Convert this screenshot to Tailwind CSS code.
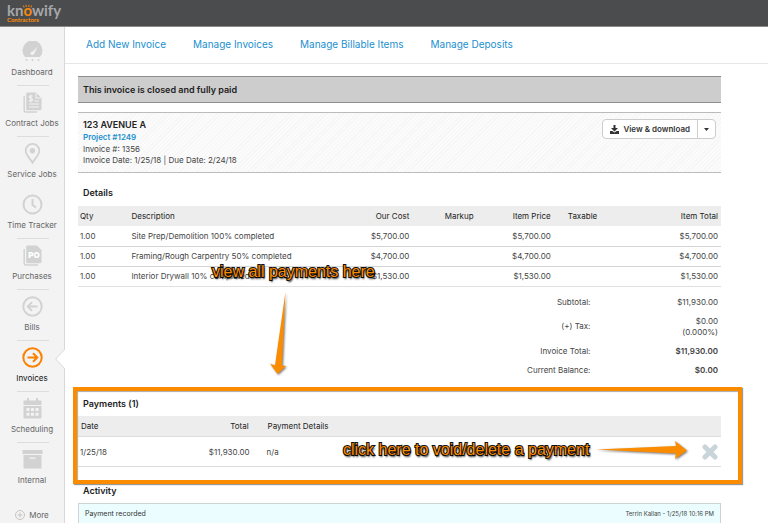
<!DOCTYPE html>
<html lang="en">
<head>
  <meta charset="utf-8">
  <meta name="viewport" content="width=device-width, initial-scale=1">
  <title>Knowify - Invoice</title>
  <script src="https://cdn.jsdelivr.net/npm/@tailwindcss/browser@4"></script>
</head>
<body class="relative flex min-h-screen flex-col bg-white font-['Inter',sans-serif] text-[8px] leading-3 text-[#444]">

  <header class="flex h-[27px] shrink-0 items-start border-b border-[#8a8a8a] bg-[#4b4c4e] px-[7px] pt-1">
    <a href="#" class="relative block font-['Lato',sans-serif]">
      <span class="block text-[15px] leading-[13px] font-bold text-[#a6a7a9]">kn<span class="text-[#f7890b]">o</span>wify</span>
      <span class="block text-[6px] leading-[6px] font-black text-[#f7890b]">Contractors</span>
      <svg class="absolute top-0 left-[16px] h-[4px] w-[9px]" viewBox="0 0 9 4" fill="none" stroke="#f7890b" stroke-width="1"><path d="M1 3.5 0.5 1.5M3.2 3 3 .8M5.8 3 6 .8M8 3.5l.5-2" /></svg>
    </a>
  </header>

  <div class="flex flex-1">
    <!-- sidebar -->
    <nav class="w-[65px] shrink-0 border-r border-[#d8d8d8] bg-[#f3f3f3] pt-2 text-center text-[#666]">
      <ul>
        <li class="relative h-[51px]">
          <a href="#" class="flex flex-col items-center gap-1 pt-[6px]">
            <svg class="h-[21px] w-[21px]" viewBox="0 0 21 21" fill="#d2d2d2"><path d="M3 16A10 10 0 1 1 18 16Z"/><path d="M9 12.5 15.5 5.5 11.8 13.5Z" fill="#f3f3f3"/><circle cx="10.3" cy="12.3" r="1.8" fill="#f3f3f3"/><circle cx="4.5" cy="19" r="1.1"/><circle cx="10.5" cy="19" r="1.1"/><circle cx="16.5" cy="19" r="1.1"/></svg>
            Dashboard
          </a>
          <span class="absolute bottom-0 left-[17px] w-8 border-b border-[#ddd]"></span>
        </li>
        <li class="relative h-[51px]">
          <a href="#" class="flex flex-col items-center gap-1 pt-[6px]">
            <svg class="h-[21px] w-[21px]" viewBox="0 0 21 21"><path d="M2.2 4v14.5a1.5 1.5 0 0 0 1.5 1.5H15" fill="none" stroke="#d2d2d2" stroke-width="1.5"/><path d="M5.5.5H14L19.5 6v11a1.3 1.3 0 0 1-1.3 1.3H5.5A1.3 1.3 0 0 1 4.2 17V1.8A1.3 1.3 0 0 1 5.5.5Z" fill="#d2d2d2"/><path d="M14 1v5h5M12.5 9h4.5M7 12h10M7 15h10M10.5 4.2C9.5 3.4 7.3 3.5 7.3 5s3.2 1 3.2 2.7S8 9.3 7 8.5M8.9 2.7v7.5" fill="none" stroke="#f3f3f3" stroke-width="1.1"/></svg>
            <span class="whitespace-nowrap">Contract Jobs</span>
          </a>
          <span class="absolute bottom-0 left-[17px] w-8 border-b border-[#ddd]"></span>
        </li>
        <li class="relative h-[51px]">
          <a href="#" class="flex flex-col items-center gap-1 pt-[6px]">
            <svg class="h-[21px] w-[21px]" viewBox="0 0 21 21" fill="none" stroke="#d2d2d2" stroke-width="1.8"><path d="M10.5 19.8C9 16.5 3.7 12 3.7 7.7a6.8 6.8 0 0 1 13.6 0c0 4.3-5.3 8.8-6.8 12.1Z"/><circle cx="10.5" cy="7.7" r="2.7" fill="#d2d2d2" stroke="none"/></svg>
            <span class="whitespace-nowrap">Service Jobs</span>
          </a>
        </li>
        <li class="relative h-[51px]">
          <a href="#" class="flex flex-col items-center gap-1 pt-[6px]">
            <svg class="h-[21px] w-[21px]" viewBox="0 0 21 21" fill="none" stroke="#d2d2d2" stroke-width="2"><circle cx="10.5" cy="10.5" r="9"/><path d="M10.5 5v6l3.5 2.5"/></svg>
            <span class="whitespace-nowrap">Time Tracker</span>
          </a>
          <span class="absolute bottom-0 left-[17px] w-8 border-b border-[#ddd]"></span>
        </li>
        <li class="relative h-[51px]">
          <a href="#" class="flex flex-col items-center gap-1 pt-[6px]">
            <svg class="h-[21px] w-[21px]" viewBox="0 0 21 21"><path d="M2.2 4v14.5a1.5 1.5 0 0 0 1.5 1.5H16" fill="none" stroke="#d2d2d2" stroke-width="1.5"/><path d="M5.5.5H15L19.5 5v12a1.3 1.3 0 0 1-1.3 1.3H5.5A1.3 1.3 0 0 1 4.2 17V1.8A1.3 1.3 0 0 1 5.5.5Z" fill="#d2d2d2"/><text x="12" y="12.5" text-anchor="middle" font-size="8" font-weight="900" fill="#fff">PO</text></svg>
            Purchases
          </a>
          <span class="absolute bottom-0 left-[17px] w-8 border-b border-[#ddd]"></span>
        </li>
        <li class="relative h-[51px]">
          <a href="#" class="flex flex-col items-center gap-1 pt-[6px]">
            <svg class="h-[21px] w-[21px]" viewBox="0 0 21 21" fill="none" stroke="#d2d2d2" stroke-width="1.9"><circle cx="10.5" cy="10.5" r="9.2"/><path d="M15.5 10.5H6M10 6.2 5.7 10.5 10 14.8"/></svg>
            Bills
          </a>
          <span class="absolute bottom-0 left-[17px] w-8 border-b border-[#ddd]"></span>
        </li>
        <li class="relative h-[51px]">
          <a href="#" aria-current="page" class="flex flex-col items-center gap-1 pt-[6px] text-[#111]">
            <svg class="h-[21px] w-[21px]" viewBox="0 0 21 21" fill="none" stroke="#fb8200" stroke-width="2"><circle cx="10.5" cy="10.5" r="9.2"/><path d="M5.5 10.5H15M11 6.2 15.3 10.5 11 14.8"/></svg>
            Invoices
          </a>
          <svg class="absolute top-[8px] -right-px h-[20px] w-[10px]" viewBox="0 0 10 20"><path d="M10 0 .7 10 10 20" fill="#fff" stroke="#d8d8d8"/></svg>
          <span class="absolute bottom-0 left-[17px] w-8 border-b border-[#ddd]"></span>
        </li>
        <li class="relative h-[51px]">
          <a href="#" class="flex flex-col items-center gap-1 pt-[6px]">
            <svg class="h-[21px] w-[21px]" viewBox="0 0 21 21" fill="#d2d2d2"><path d="M5 0h2v4H5zM14 0h2v4h-2zM2.5 2.5h16a1 1 0 0 1 1 1V7h-18V3.5a1 1 0 0 1 1-1ZM1.5 8h18v11.5a1 1 0 0 1-1 1h-16a1 1 0 0 1-1-1Z"/><path d="M4.5 10h3v3h-3zM9 10h3v3H9zM13.5 10h3v3h-3zM4.5 14.8h3v3h-3zM9 14.8h3v3H9zM13.5 14.8h3v3h-3z" fill="#f3f3f3"/></svg>
            Scheduling
          </a>
          <span class="absolute bottom-0 left-[17px] w-8 border-b border-[#ddd]"></span>
        </li>
        <li class="relative h-[51px]">
          <a href="#" class="flex flex-col items-center gap-1 pt-[6px]">
            <svg class="h-[21px] w-[21px]" viewBox="0 0 21 21" fill="#d2d2d2"><path d="M.5 1h20v4H.5zM1.5 6h18v13.5h-18z"/><path d="M7.5 8.5h6v1.3h-6z" fill="#f3f3f3"/></svg>
            Internal
          </a>
        </li>
        <li class="pt-[15px]">
          <a href="#" class="flex items-center justify-center gap-1">
            <svg class="h-[10px] w-[10px]" viewBox="0 0 10 10" fill="none" stroke="#c4c4c4"><circle cx="5" cy="5" r="4.5"/><path d="M5 2.5v5M2.5 5h5"/></svg>
            More
          </a>
        </li>
      </ul>
    </nav>

    <main class="flex min-w-0 flex-1 flex-col">
      <nav class="flex h-[37px] shrink-0 items-center gap-[27px] border-b border-[#e6e6e6] px-[21px] pb-[2px] text-[10px] text-[#1b8fd0]">
        <a href="#">Add New Invoice</a>
        <a href="#">Manage Invoices</a>
        <a href="#">Manage Billable Items</a>
        <a href="#">Manage Deposits</a>
      </nav>

      <div class="flex flex-1 flex-col pt-3 pr-[47px] pl-[13px]">
        <p class="flex h-[27px] items-center border-y border-[#8e8e8e] bg-[#cdcdcd] px-[5px] text-[9px] font-semibold text-[#222]">This invoice is closed and fully paid</p>

        <section class="mt-[9px] flex h-[61px] items-start justify-between border-y border-[#bbb] bg-[repeating-linear-gradient(135deg,#fbfbfb_0_2px,#f6f6f6_2px_3px)] px-[5px] pt-[6px]">
          <div>
            <h1 class="text-[9px] font-semibold text-[#222]">123 AVENUE A</h1>
            <a href="#" class="block font-semibold text-[#1b8fd0]">Project #1249</a>
            <p>Invoice #: 1356</p>
            <p class="leading-[11px]">Invoice Date: 1/25/18 | Due Date: 2/24/18</p>
          </div>
          <div class="flex h-5 rounded-sm border border-[#ccc] bg-white text-[#333]">
            <button type="button" class="flex items-center gap-1 px-[7px] font-semibold">
              <svg class="h-[9px] w-[9px]" viewBox="0 0 9 9" fill="#333"><path d="M3.5 0h2v3H8L4.5 6.5 1 3h2.5zM0 6h2.3l2.2 1.5L6.7 6H9v3H0z"/></svg>
              View &amp; download
            </button>
            <button type="button" aria-label="More options" class="flex w-[18px] items-center justify-center border-l border-[#ccc]">
              <svg class="h-[3px] w-[5px]" viewBox="0 0 5 3" fill="#333"><path d="M0 0h5L2.5 3z"/></svg>
            </button>
          </div>
        </section>

        <h2 class="mt-[14px] px-[5px] text-[9px] font-semibold text-[#222]">Details</h2>
        <table class="mt-[7px] w-full table-fixed">
          <thead>
            <tr class="h-5 bg-[#ededed] text-[#222]">
              <th class="w-[8%] px-[2px] text-left font-normal">Qty</th>
              <th class="w-[32%] px-[2px] text-left font-normal">Description</th>
              <th class="w-[12%] px-[3px] text-right font-normal">Our Cost</th>
              <th class="w-[10%] px-[3px] text-right font-normal">Markup</th>
              <th class="w-[12%] px-[3px] text-right font-normal">Item Price</th>
              <th class="w-[12%] pl-[14px] text-left font-normal">Taxable</th>
              <th class="w-[14%] px-[3px] text-right font-normal">Item Total</th>
            </tr>
          </thead>
          <tbody>
            <tr class="h-5 border-b border-[#d4d4d4]">
              <td class="px-[2px]">1.00</td>
              <td class="px-[2px] whitespace-nowrap">Site Prep/Demolition 100% completed</td>
              <td class="px-[3px] text-right">$5,700.00</td>
              <td></td>
              <td class="px-[3px] text-right">$5,700.00</td>
              <td></td>
              <td class="px-[3px] text-right">$5,700.00</td>
            </tr>
            <tr class="h-5 border-b border-[#d4d4d4]">
              <td class="px-[2px]">1.00</td>
              <td class="px-[2px] whitespace-nowrap">Framing/Rough Carpentry 50% completed</td>
              <td class="px-[3px] text-right">$4,700.00</td>
              <td></td>
              <td class="px-[3px] text-right">$4,700.00</td>
              <td></td>
              <td class="px-[3px] text-right">$4,700.00</td>
            </tr>
            <tr class="h-5 border-b border-[#e0e0e0]">
              <td class="px-[2px]">1.00</td>
              <td class="px-[2px] whitespace-nowrap">Interior Drywall 10% completed</td>
              <td class="px-[3px] text-right">$1,530.00</td>
              <td></td>
              <td class="px-[3px] text-right">$1,530.00</td>
              <td></td>
              <td class="px-[3px] text-right">$1,530.00</td>
            </tr>
          </tbody>
        </table>

        <table class="mt-[6px] w-full table-fixed text-right leading-[11px]">
          <tbody>
            <tr class="h-[19px]">
              <th class="w-[80%] px-[2px] font-normal">Subtotal:</th>
              <td class="px-[3px]">$11,930.00</td>
            </tr>
            <tr class="h-[30px]">
              <th class="px-[2px] font-normal">(+) Tax:</th>
              <td class="px-[3px]">$0.00<br>(0.000%)</td>
            </tr>
            <tr class="h-[19px]">
              <th class="px-[2px] font-normal">Invoice Total:</th>
              <td class="px-[3px] font-semibold">$11,930.00</td>
            </tr>
            <tr class="h-[19px]">
              <th class="px-[2px] font-normal">Current Balance:</th>
              <td class="px-[3px] font-semibold">$0.00</td>
            </tr>
          </tbody>
        </table>

        <section class="relative mt-[18px]">
          <h2 class="px-[5px] text-[9px] font-semibold text-[#222]">Payments (1)</h2>
          <table class="mt-[6px] w-full table-fixed">
            <thead>
              <tr class="h-[21px] border-b border-[#ddd] bg-[#ededed] text-[#222]">
                <th class="w-[15%] px-[3px] text-left font-normal">Date</th>
                <th class="w-[12%] px-[3px] text-right font-normal">Total</th>
                <th class="pl-4 text-left font-normal">Payment Details</th>
                <th class="w-[6%]"></th>
              </tr>
            </thead>
            <tbody>
              <tr class="h-[30px] border-b border-[#ddd]">
                <td class="px-[2px]">1/25/18</td>
                <td class="px-[2px] text-right">$11,930.00</td>
                <td class="pl-[15px]">n/a</td>
                <td class="pr-[3px]">
                  <button type="button" aria-label="Delete payment" class="ml-auto block">
                    <svg class="h-4 w-4" viewBox="0 0 16 16" fill="none" stroke="#c9d5da" stroke-width="5" stroke-linecap="round"><path d="m3 3 10 10M13 3 3 13"/></svg>
                  </button>
                </td>
              </tr>
            </tbody>
          </table>
          <div class="pointer-events-none absolute -top-[11px] -right-[21px] -bottom-[17px] -left-[5px] border-4 border-[#fb8c00] shadow-[1px_1px_1px_#999,inset_1px_1px_1px_#aaa]"></div>
        </section>

        <h2 class="mt-[18px] px-[5px] text-[9px] font-semibold text-[#222]">Activity</h2>
        <div class="mt-[6px] flex flex-1 items-start justify-between border border-b-0 border-[#ccd4d4] bg-[#ebfdfe] px-[6px] pt-1">
          <span class="text-[7px] text-[#333]">Payment recorded</span>
          <span class="text-[6px]">Terrin Kallan - 1/25/18 10:16 PM</span>
        </div>
      </div>
    </main>
  </div>

  <!-- callouts -->
  <p class="absolute top-[262px] left-[212px] font-['Liberation_Sans',sans-serif] text-[16px] leading-5 whitespace-nowrap text-[#fb8c00] [-webkit-text-stroke:2px_#111] [paint-order:stroke_fill] [text-shadow:1px_2px_2px_#000]">view all payments here</p>
  <svg class="absolute top-[290px] left-[266px] h-[88px] w-[24px] drop-shadow-[1px_1px_1px_#777]" viewBox="0 0 24 88" fill="#fb8c00"><path d="M19.5 2 16 75.5l4 .5-8.5 8L4 73.5l5 2z"/></svg>
  <p class="absolute top-[440px] left-[343px] font-['Liberation_Sans',sans-serif] text-[16px] leading-5 whitespace-nowrap text-[#fb8c00] [-webkit-text-stroke:2px_#111] [paint-order:stroke_fill] [text-shadow:1px_2px_2px_#000]">click here to void/delete a payment</p>
  <svg class="absolute top-[440px] left-[594px] h-[20px] w-[94px] drop-shadow-[1px_1px_1px_#777]" viewBox="0 0 94 20" fill="#fb8c00"><path d="M2 9.5 82 6l-1-5 12 9.5L81 19l1-5.5z"/></svg>
</body>
</html>
